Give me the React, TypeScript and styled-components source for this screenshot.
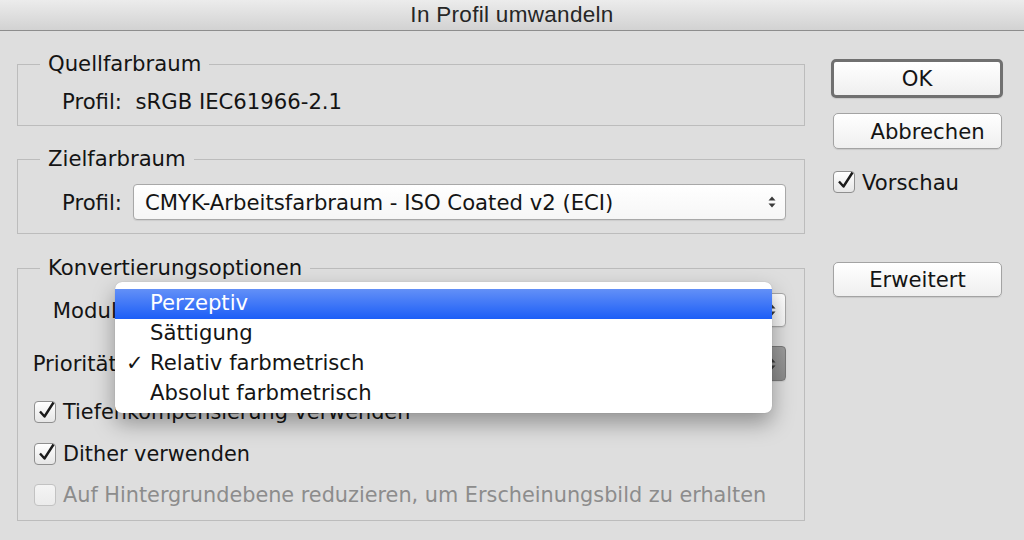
import { createGlobalStyle, styled } from "styled-components";

const GlobalStyle = createGlobalStyle`
  html, body {
    margin: 0;
    padding: 0;
    background: #dedede;
  }
  * {
    box-sizing: border-box;
  }
`;

const Window = styled.div`
  position: relative;
  width: 1024px;
  height: 540px;
  overflow: hidden;
  background: #dedede;
  font-family: "DejaVu Sans", "Liberation Sans", sans-serif;
  font-size: 21.2px;
  color: #141414;
`;

const TitleBar = styled.div`
  height: 31px;
  display: flex;
  align-items: center;
  justify-content: center;
  background: linear-gradient(#ececec, #d2d2d2);
  border-bottom: 1px solid #8d8d8d;
  font-family: "Liberation Sans", Arial, sans-serif;
  font-size: 22.5px;
  letter-spacing: 0.3px;
  color: #262626;
`;

const Body = styled.div`
  display: flex;
  padding: 0 21px 0 17px;
`;

const LeftColumn = styled.div`
  width: 788px;
  display: flex;
  flex-direction: column;
`;

const RightColumn = styled.div`
  margin-left: 26px;
  width: 172px;
  display: flex;
  flex-direction: column;
  padding-top: 28px;
`;

const Group = styled.fieldset<{ $top: number }>`
  margin: ${(p) => p.$top}px 0 0 0;
  padding: 0;
  border: 1px solid #bcbcbc;
  min-width: 0;
`;

const GroupBody = styled.div<{ $pad: string }>`
  padding: ${(p) => p.$pad};
`;

const Legend = styled.legend`
  margin-left: 22px;
  padding: 0 8px;
  line-height: 24px;
`;

const Line = styled.div<{ $mt: number }>`
  margin-top: ${(p) => p.$mt}px;
  display: flex;
  align-items: center;
  height: 26px;
  white-space: nowrap;
`;

const Row = styled.div<{ $mt: number; $h: number }>`
  margin-top: ${(p) => p.$mt}px;
  height: ${(p) => p.$h}px;
  display: flex;
  align-items: center;
  white-space: nowrap;
`;

const Label = styled.span<{ $w?: number }>`
  width: ${(p) => (p.$w ? `${p.$w}px` : "auto")};
  display: inline-flex;
  justify-content: flex-end;
  white-space: nowrap;
  margin-right: 11px;
`;

const Select = styled.div<{ $pressed?: boolean }>`
  flex: 1;
  height: 100%;
  display: flex;
  align-items: center;
  justify-content: space-between;
  padding: 0 8px 0 11px;
  border: 1px solid ${(p) => (p.$pressed ? "#7a7a7a" : "#a8a8a8")};
  border-radius: 4px;
  background: ${(p) =>
    p.$pressed ? "linear-gradient(#9c9c9c, #8c8c8c)" : "linear-gradient(#ffffff, #f6f6f6)"};
  box-shadow: 0 1px 1px rgba(0, 0, 0, 0.08);
`;

const Arrows = () => (
  <svg width="10" height="14" viewBox="0 0 10 14">
    <path d="M5 1.5 L8.5 5.5 L1.5 5.5 Z" fill="#3a3a3a" />
    <path d="M5 12.5 L8.5 8.5 L1.5 8.5 Z" fill="#3a3a3a" />
  </svg>
);

const CheckRow = styled.div<{ $mt: number; $disabled?: boolean }>`
  margin-top: ${(p) => p.$mt}px;
  height: 28px;
  display: flex;
  align-items: center;
  gap: 7px;
  white-space: nowrap;
  font-size: 20.8px;
  color: ${(p) => (p.$disabled ? "#8c8c8c" : "#141414")};
`;

const Box = styled.span<{ $disabled?: boolean }>`
  position: relative;
  width: 22px;
  height: 22px;
  flex: none;
  border: 1px solid ${(p) => (p.$disabled ? "#c2c2c2" : "#8f8f8f")};
  border-radius: 4px;
  background: ${(p) =>
    p.$disabled ? "linear-gradient(#f4f4f4, #ebebeb)" : "linear-gradient(#ffffff, #e6e6e6)"};
`;

const Tick = styled.svg`
  position: absolute;
  left: 2px;
  top: -3px;
`;

function Checkbox({ checked, disabled }: { checked?: boolean; disabled?: boolean }) {
  return (
    <Box $disabled={disabled}>
      {checked ? (
        <Tick width="20" height="22" viewBox="0 0 20 22">
          <path
            d="M3 12.5 L7.5 17.5 L16.5 3.5"
            fill="none"
            stroke="#1a1a1a"
            strokeWidth="2.4"
            strokeLinejoin="round"
          />
        </Tick>
      ) : null}
    </Box>
  );
}

const Button = styled.button<{ $default?: boolean; $h: number; $mt: number; $shift?: number }>`
  margin-top: ${(p) => p.$mt}px;
  margin-left: ${(p) => (p.$default ? 0 : 2)}px;
  width: ${(p) => (p.$default ? 172 : 169)}px;
  height: ${(p) => p.$h}px;
  padding: 0 0 0 ${(p) => p.$shift ?? 0}px;
  font-family: inherit;
  font-size: 21.2px;
  color: #141414;
  background: linear-gradient(#ffffff, #efefef);
  border: ${(p) => (p.$default ? "3px solid #707070" : "1px solid #a3a3a3")};
  border-radius: 5px;
  box-shadow: 0 1px 1px rgba(0, 0, 0, 0.1);
`;

const Preview = styled.div`
  margin-top: 21px;
  margin-left: 2px;
  display: flex;
  align-items: center;
  gap: 7px;
  height: 24px;
`;

const Menu = styled.div`
  position: absolute;
  left: 115px;
  top: 282px;
  width: 657px;
  padding: 7px 0 4px;
  background: #ffffff;
  border-radius: 7px;
  box-shadow: 0 10px 22px rgba(0, 0, 0, 0.35), 0 0 1px rgba(0, 0, 0, 0.25);
`;

const MenuItem = styled.div<{ $active?: boolean }>`
  position: relative;
  height: 30px;
  display: flex;
  align-items: center;
  padding: 0 0 3px 35px;
  color: ${(p) => (p.$active ? "#ffffff" : "#141414")};
  background: ${(p) => (p.$active ? "linear-gradient(#6390f7, #1c5ef7)" : "transparent")};
`;

const Mark = styled.span`
  position: absolute;
  left: 11px;
  font-size: 21px;
  font-weight: bold;
`;

const menuItems = ["Perzeptiv", "Sättigung", "Relativ farbmetrisch", "Absolut farbmetrisch"];

export default function App() {
  return (
    <Window>
      <GlobalStyle />
      <TitleBar>In Profil umwandeln</TitleBar>
      <Body>
        <LeftColumn>
          <Group $top={21}>
            <Legend>Quellfarbraum</Legend>
            <GroupBody $pad="0 18px 11px 44px">
              <Line $mt={12}>Profil:&nbsp; sRGB IEC61966-2.1</Line>
            </GroupBody>
          </Group>

          <Group $top={21}>
            <Legend>Zielfarbraum</Legend>
            <GroupBody $pad="0 18px 13px 44px">
              <Row $mt={13} $h={36}>
                <Label>Profil:</Label>
                <Select>
                  <span>CMYK-Arbeitsfarbraum - ISO Coated v2 (ECI)</span>
                  <Arrows />
                </Select>
              </Row>
            </GroupBody>
          </Group>

          <Group $top={22}>
            <Legend>Konvertierungsoptionen</Legend>
            <GroupBody $pad="0 18px 11px 16px">
              <Row $mt={13} $h={34}>
                <Label $w={90}>Modul:</Label>
                <Select>
                  <span>Adobe (ACE)</span>
                  <Arrows />
                </Select>
              </Row>
              <Row $mt={19} $h={35}>
                <Label $w={90}>Priorität:</Label>
                <Select $pressed>
                  <span>Relativ farbmetrisch</span>
                  <Arrows />
                </Select>
              </Row>
              <CheckRow $mt={17}>
                <Checkbox checked />
                Tiefenkompensierung verwenden
              </CheckRow>
              <CheckRow $mt={14}>
                <Checkbox checked />
                Dither verwenden
              </CheckRow>
              <CheckRow $mt={13} $disabled>
                <Checkbox disabled />
                Auf Hintergrundebene reduzieren, um Erscheinungsbild zu erhalten
              </CheckRow>
            </GroupBody>
          </Group>
        </LeftColumn>

        <RightColumn>
          <Button $default $h={39} $mt={0}>
            OK
          </Button>
          <Button $h={36} $mt={15} $shift={20}>
            Abbrechen
          </Button>
          <Preview>
            <Checkbox checked />
            Vorschau
          </Preview>
          <Button $h={35} $mt={68}>
            Erweitert
          </Button>
        </RightColumn>
      </Body>

      <Menu>
        {menuItems.map((item, i) => (
          <MenuItem key={item} $active={i === 0}>
            {i === 2 ? <Mark>✓</Mark> : null}
            {item}
          </MenuItem>
        ))}
      </Menu>
    </Window>
  );
}
